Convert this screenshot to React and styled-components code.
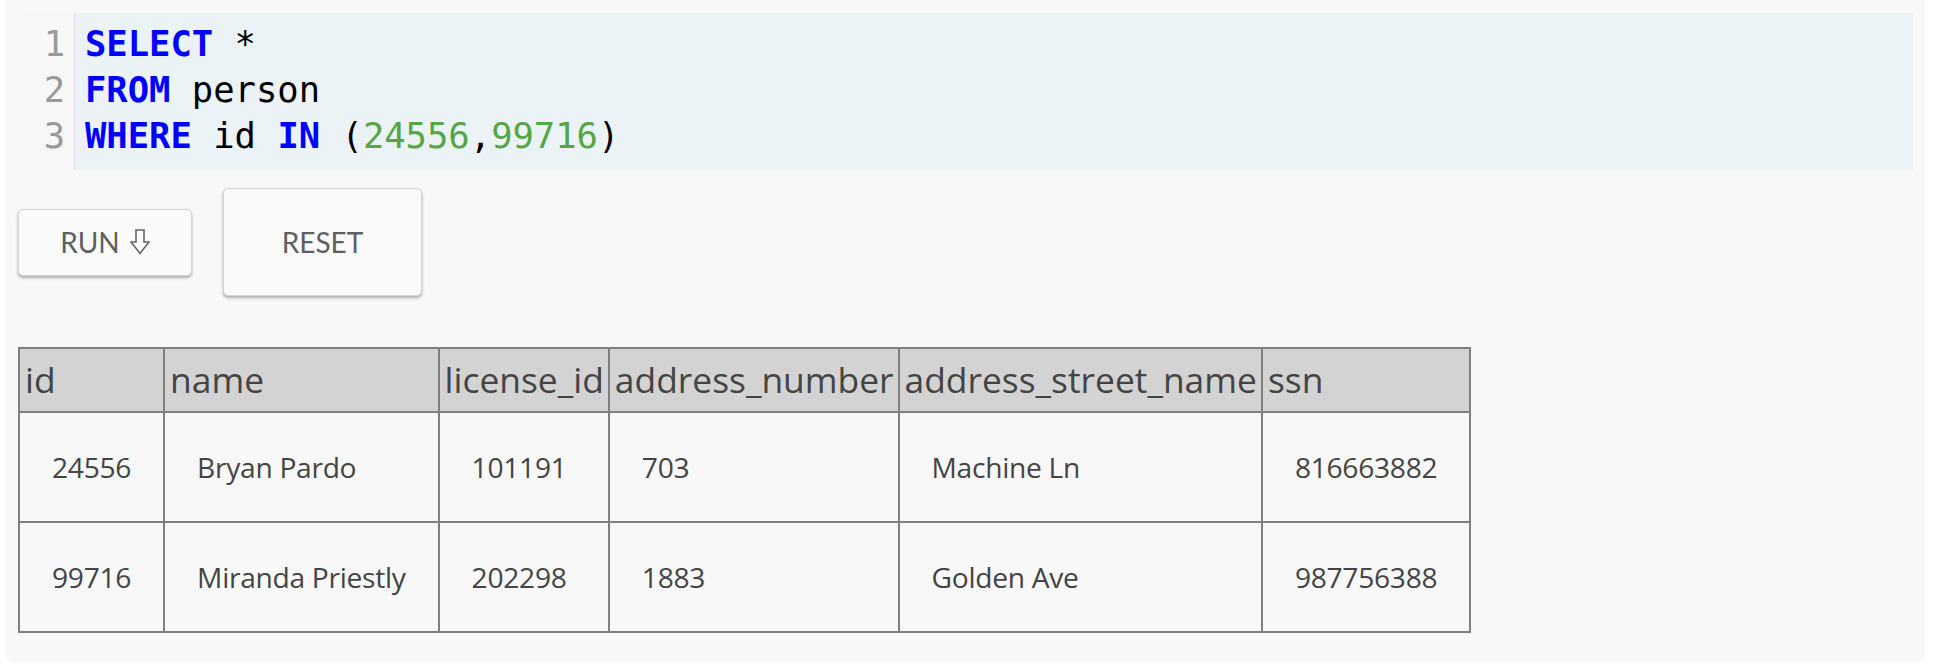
import React from 'react'
import styled, { createGlobalStyle } from 'styled-components'

const GlobalStyle = createGlobalStyle`
  html, body {
    margin: 0;
    padding: 0;
    background: #ffffff;
  }
`

const Panel = styled.section`
  margin: 0 11px 3px 5px;
  padding: 13px 12px 29px 12px;
  background: #f8f8f8;
  border-radius: 0 0 9px 9px;
  font-family: "Open Sans", Lato, sans-serif;
`

const Editor = styled.div`
  display: flex;
  background: #ebf3f7;
  font-family: "DejaVu Sans Mono", "Liberation Mono", monospace;
  font-size: 35.5px;
  line-height: 46px;
`

const Gutter = styled.div`
  width: 58px;
  padding: 8px 9px 11px 0;
  box-sizing: border-box;
  background: #f7f7f7;
  border-right: 1px solid #dddddd;
  color: #999999;
  text-align: right;
`

const Code = styled.div`
  flex: 1;
  padding: 8px 10px 11px 10px;
  color: #000000;
  white-space: pre;
`

const Line = styled.div`
  height: 46px;
`

const Keyword = styled.span`
  color: #0000ff;
  font-weight: bold;
`

const Num = styled.span`
  color: #55a645;
`

const Toolbar = styled.div`
  display: flex;
  align-items: center;
  gap: 31px;
  margin: 18px 0 51px 1px;
`

const Button = styled.button`
  display: flex;
  align-items: center;
  justify-content: center;
  gap: 10px;
  width: ${p => p.$w}px;
  height: ${p => p.$h}px;
  background: #fafafa;
  border: 1px solid #d4d4d4;
  border-radius: 5px;
  box-shadow: 0 2px 3px rgba(0, 0, 0, 0.3);
  color: #5f5f5f;
  font-family: Lato, "Open Sans", sans-serif;
  font-size: 28px;
  padding: 0;
  cursor: pointer;
`

const Arrow = () => (
  <svg width="20" height="26" viewBox="0 0 20 26" fill="none" stroke="#666666" strokeWidth="1.6" strokeLinejoin="miter">
    <path d="M6 1 H14 V13 H19 L10 24.5 L1 13 H6 Z" />
  </svg>
)

const Table = styled.table`
  border-collapse: collapse;
  color: #444444;
  margin-left: 1px;

  th {
    background: #d3d3d3;
    border: 2px solid #808080;
    text-align: left;
    font-weight: normal;
    font-size: 35.4px;
    padding: 7px 4px 8px 5px;
    line-height: 47px;
  }

  td {
    border: 2px solid #808080;
    font-size: 28.2px;
    letter-spacing: -0.3px;
    line-height: 30px;
    padding: 39px 32px 39px 32px;
    text-align: left;
  }
`

const columns = ['id', 'name', 'license_id', 'address_number', 'address_street_name', 'ssn']

const rows = [
  ['24556', 'Bryan Pardo', '101191', '703', 'Machine Ln', '816663882'],
  ['99716', 'Miranda Priestly', '202298', '1883', 'Golden Ave', '987756388'],
]

const App = () => {
  return (
    <>
      <GlobalStyle />
      <Panel>
        <Editor>
          <Gutter>
            <Line>1</Line>
            <Line>2</Line>
            <Line>3</Line>
          </Gutter>
          <Code>
            <Line><Keyword>SELECT</Keyword> *</Line>
            <Line><Keyword>FROM</Keyword> person</Line>
            <Line><Keyword>WHERE</Keyword> id <Keyword>IN</Keyword> (<Num>24556</Num>,<Num>99716</Num>)</Line>
          </Code>
        </Editor>
        <Toolbar>
          <Button $w={174} $h={67}>RUN <Arrow /></Button>
          <Button $w={199} $h={108}>RESET</Button>
        </Toolbar>
        <Table>
          <thead>
            <tr>
              {columns.map(c => <th key={c}>{c}</th>)}
            </tr>
          </thead>
          <tbody>
            {rows.map(r => (
              <tr key={r[0]}>
                {r.map((v, i) => <td key={i}>{v}</td>)}
              </tr>
            ))}
          </tbody>
        </Table>
      </Panel>
    </>
  )
}

export default App
